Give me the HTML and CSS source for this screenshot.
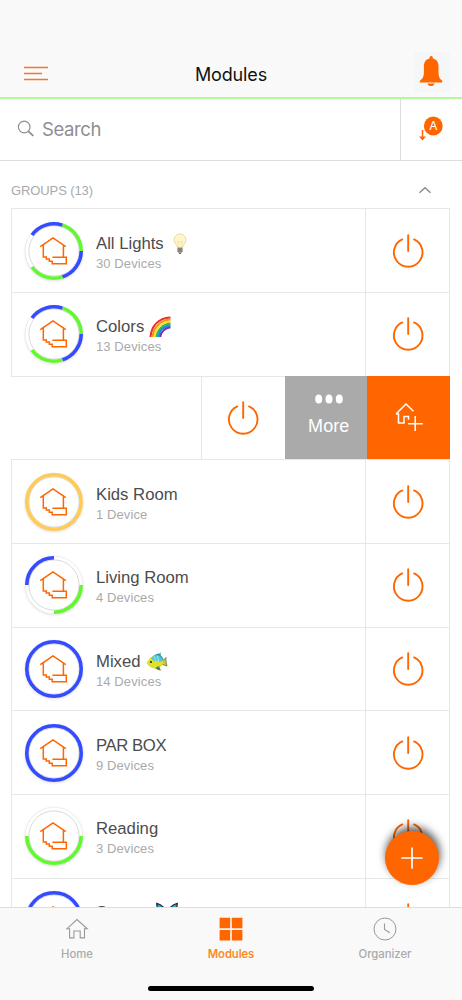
FILE: index.html
```html
<!DOCTYPE html>
<html lang="en">
<head>
<meta charset="utf-8">
<title>Modules</title>
<link rel="stylesheet" href="styles.css">
</head>
<body>
<svg class="defs" width="0" height="0" aria-hidden="true">
  <symbol id="house" viewBox="0 0 64 64">
    <path d="M18.3 27.7 31 18.8l12.8 8.900M21.300 26v12h3v2h3v2.200h2.900v2.600h14.100V38.200H30.400M41.400 26v12" fill="none" stroke="#ff6600" stroke-width="1.500"/>
  </symbol>
  <symbol id="track" viewBox="0 0 64 64">
    <circle cx="32" cy="32" r="28.8" fill="#fff" stroke="#ececec" stroke-width=".8"/>
    <circle cx="32" cy="32" r="25.1" fill="#fff" stroke="#dadada" stroke-width="1"/>
  </symbol>
  <symbol id="power" viewBox="0 0 36 36">
    <path d="M12.3 6.4a14.3 14.3 0 1 0 11.8 0M18.2 2.1v16" fill="none" stroke="#ff6600" stroke-width="1.9" stroke-linecap="round"/>
  </symbol>
</svg>

<div class="app">
  <header class="header">
    <svg class="menu" viewBox="0 0 24 16"><path d="M0 1.500h24M0 7.500h18M0 13.500h24" stroke="#f47632" stroke-width="1.500"/></svg>
    <h1 class="title">Modules</h1>
    <span class="bell"><svg viewBox="0 0 36 40"><path d="M15.500 5.700a1.700 1.700 0 0 1 3.400 0v.800c4 .8 5.600 4 5.600 8v5.700c0 4 1 6.900 3.800 8.500v1.700H5.800v-1.700c3-1.600 4.100-4.500 4.100-8.500v-5.700c0-4 1.600-7.200 5.600-8zM13.500 31.500h7c-.4 1.700-1.700 2.600-3.500 2.600s-3.100-.9-3.500-2.600z" fill="#ff6600"/></svg></span>
  </header>

  <div class="search">
    <div class="field">
      <svg viewBox="0 0 18 18"><circle cx="7.2" cy="7" r="5.8"/><path d="m11.5 11.3 4.8 4.6" stroke-width="1.8"/></svg>
      <span>Search</span>
    </div>
    <div class="sort">
      <svg viewBox="0 0 26 26"><circle cx="15.3" cy="10" r="9.4" fill="#ff6600"/><path d="M4.500 14v9" stroke="#ff6600" stroke-width="1.500"/><path d="M1 20.400h7L4.500 24.500z" fill="#ff6600"/><text x="15.300" y="14" text-anchor="middle">A</text></svg>
    </div>
  </div>

  <main class="content">
    <div class="section"><span>GROUPS (13)</span><svg viewBox="0 0 14 8"><path d="m1.500 6.700 5.500-5 5.500 5" fill="none" stroke="#888" stroke-width="1.300"/></svg></div>

    <div class="row">
      <div class="info">
        <svg class="ring"><use href="#track"/><g class="arcs" transform="rotate(18 32 32)"><circle class="green" cx="32" cy="32" r="27.2" pathLength="360" stroke-dasharray="72 288" transform="rotate(-90 32 32)"/><circle class="blue" cx="32" cy="32" r="27.2" pathLength="360" stroke-dasharray="72 288" transform="rotate(-18 32 32)"/><circle class="green" cx="32" cy="32" r="27.2" pathLength="360" stroke-dasharray="72 288" transform="rotate(54 32 32)"/><circle class="blue" cx="32" cy="32" r="27.2" pathLength="360" stroke-dasharray="72 288" transform="rotate(198 32 32)"/></g><use href="#house"/></svg>
        <div class="label"><div class="name">All Lights <svg class="emoji bulb" viewBox="0 0 18 22"><path d="M9 1C5 1 3 4 3.2 7c.1 3.1 2.5 4.4 3.2 7.5h5.2c.7-3.1 3.2-4.4 3.2-7.5C15 4 13 1 9 1z" fill="#fff5ce" stroke="#ecd999"/><path d="M7.5 14 6.7 8.3 9 9.5l2.3-1.2-.8 5.7" fill="none" stroke="#f1d68c" stroke-width=".7"/><path d="M6.5 14.5h5v4L10 20.7H8l-1.5-2.2z" fill="#aaa69d"/><path d="M6.5 16h5m-5 2h5M8 20.5h2" stroke="#5c5a56" stroke-width=".9"/></svg></div><div class="count">30 Devices</div></div>
      </div>
      <div class="toggle"><svg><use href="#power"/></svg></div>
    </div>

    <div class="row">
      <div class="info">
        <svg class="ring"><use href="#track"/><g class="arcs" transform="rotate(18 32 32)"><circle class="green" cx="32" cy="32" r="27.2" pathLength="360" stroke-dasharray="72 288" transform="rotate(-90 32 32)"/><circle class="blue" cx="32" cy="32" r="27.2" pathLength="360" stroke-dasharray="72 288" transform="rotate(-18 32 32)"/><circle class="green" cx="32" cy="32" r="27.2" pathLength="360" stroke-dasharray="72 288" transform="rotate(54 32 32)"/><circle class="blue" cx="32" cy="32" r="27.2" pathLength="360" stroke-dasharray="72 288" transform="rotate(198 32 32)"/></g><use href="#house"/></svg>
        <div class="label"><div class="name">Colors <svg class="emoji rainbow" viewBox="0 0 22 22"><g fill="none" stroke-width="2.1"><path d="M1.5 21C2.5 10 9 2.3 21.5 1.5" stroke="#ed2e2a"/><path d="M3.5 21C4.5 11.3 10.8 4.3 21.5 3.5" stroke="#ff8c1c"/><path d="M5.5 21C6.5 12.6 12 6.3 21.5 5.5" stroke="#ffe129"/><path d="M7.5 21C8.5 13.9 13.5 8.3 21.5 7.5" stroke="#34ba42"/><path d="M9.4 21c1-6 5-11 12.1-11.6" stroke="#198ee8"/><path d="M11.2 21c1-5 4.3-9 10.3-9.7" stroke="#7537b8"/></g></svg></div><div class="count">13 Devices</div></div>
      </div>
      <div class="toggle"><svg><use href="#power"/></svg></div>
    </div>

    <div class="row swiped">
      <div class="rest"></div>
      <div class="toggle"><svg><use href="#power"/></svg></div>
      <div class="more"><svg viewBox="0 0 28 10"><g fill="#fff"><ellipse cx="3.7" cy="5" rx="3.5" ry="4.5"/><ellipse cx="14" cy="5" rx="3.5" ry="4.5"/><ellipse cx="24.3" cy="5" rx="3.5" ry="4.5"/></g></svg><span>More</span></div>
      <div class="add"><svg viewBox="0 0 30 30"><path d="M2 12 12 2l7.5 7.3M2 12h2.500v9h5.500v-6.500h4.500v3.200M21.200 14v15M14 21.800h14.800M2 12l1-1" fill="none" stroke="#fff" stroke-width="1.500"/></svg></div>
    </div>

    <div class="row">
      <div class="info">
        <svg class="ring"><use href="#track"/><g class="arcs"><circle class="yellow" cx="32" cy="32" r="27.2"/></g><use href="#house"/></svg>
        <div class="label"><div class="name">Kids Room</div><div class="count">1 Device</div></div>
      </div>
      <div class="toggle"><svg><use href="#power"/></svg></div>
    </div>

    <div class="row">
      <div class="info">
        <svg class="ring"><use href="#track"/><g class="arcs"><path class="blue" d="M4.8 32A27.2 27.2 0 0 1 32 4.8"/><path class="green" d="M59.2 32A27.2 27.2 0 0 1 32 59.2"/></g><use href="#house"/></svg>
        <div class="label"><div class="name">Living Room</div><div class="count">4 Devices</div></div>
      </div>
      <div class="toggle"><svg><use href="#power"/></svg></div>
    </div>

    <div class="row">
      <div class="info">
        <svg class="ring"><use href="#track"/><g class="arcs"><circle class="blue" cx="32" cy="32" r="27.2"/></g><use href="#house"/></svg>
        <div class="label"><div class="name">Mixed <svg class="emoji fish" viewBox="0 0 22 20"><path d="M6 5C9 2 11 1.500 13.500 1.500l1.500-1-.5 2.500c1.500 1 2.500 3 3 5l-3 1z" fill="#3596ad"/><path d="m15.500 10 4.500-4.500c-.3 3 .2 5.500 1 8.500L15.500 12z" fill="#d8c43a" stroke="#5d7548" stroke-width=".8"/><path d="M.500 11C3 6 6.500 3 10.500 3.500S16.500 7 17.500 11c-2 4-5.500 6-9 5.500-3.300-.3-6.500-2.500-8-5.500z" fill="#dfe12f"/><path d="M5 6.500C7.500 4 9 3 11.500 3.300c3 .5 4.500 3 5.300 5.700l-3 .8-2.800-1.300-3 .5z" fill="#4fc6df"/><path d="m9 16 4-2 2 4.500c-2 0-4-.8-6-2.500z" fill="#617c43"/><path d="m8.500 4.500 .8 4m2-4.500 1.500 5" stroke="#b4eef5" stroke-width=".8"/><circle cx="5" cy="10" r="1.100" fill="#222"/></svg></div><div class="count">14 Devices</div></div>
      </div>
      <div class="toggle"><svg><use href="#power"/></svg></div>
    </div>

    <div class="row">
      <div class="info">
        <svg class="ring"><use href="#track"/><g class="arcs"><circle class="blue" cx="32" cy="32" r="27.2"/></g><use href="#house"/></svg>
        <div class="label"><div class="name caps">PAR BOX</div><div class="count">9 Devices</div></div>
      </div>
      <div class="toggle"><svg><use href="#power"/></svg></div>
    </div>

    <div class="row">
      <div class="info">
        <svg class="ring"><use href="#track"/><g class="arcs"><path class="green" d="M59.2 32a27.2 27.2 0 0 1-54.4 0"/></g><use href="#house"/></svg>
        <div class="label"><div class="name">Reading</div><div class="count">3 Devices</div></div>
      </div>
      <div class="toggle"><svg><use href="#power"/></svg></div>
    </div>

    <div class="row">
      <div class="info">
        <svg class="ring"><use href="#track"/><g class="arcs"><circle class="blue" cx="32" cy="32" r="27.2"/></g><use href="#house"/></svg>
        <div class="label"><div class="name">Sweets <svg class="emoji butterfly" viewBox="0 0 22 22"><path d="M11 10C8 5 4 2 .700 1.400c.3 5 2.300 9 6 10C5 15 7 19 11 13c4 6 6 2 4.300-1.600 3.700-1 5.700-5 6-10C18 2 14 5 11 10z" fill="#35a8df" stroke="#222" stroke-width="1.200"/></svg></div></div>
      </div>
      <div class="toggle"><svg><use href="#power"/></svg></div>
    </div>
  </main>

  <nav class="tabs">
    <div class="tab"><svg viewBox="0 0 24 24"><path d="M1.800 11.800 12 2.500l10.200 9.300h-2.700v9.100h-4.300v-6.900H8.900v6.900H4.600v-9.100z" fill="none" stroke="#999" stroke-width="1.100"/></svg><span class="wide">Home</span></div>
    <div class="tab active"><svg viewBox="0 0 24 24"><path d="M.6.700h10.600v10.600H.600zM12.800.700h10.600v10.600H12.800zM.600 12.900h10.600v10.600H.600zM12.800 12.900h10.600v10.600H12.800z" fill="#ff6600"/></svg><span>Modules</span></div>
    <div class="tab"><svg viewBox="0 0 24 24"><circle cx="12" cy="12" r="11" fill="none" stroke="#999"/><path d="M11.500 6.500v6l5.300 3.300" fill="none" stroke="#999" stroke-width="1.100"/></svg><span>Organizer</span></div>
    <div class="home-bar"></div>
  </nav>
  <div class="fab"><svg viewBox="0 0 22 22"><path d="M11 1v20M1 11h20" stroke="#fff" stroke-width="1.700" stroke-linecap="round"/></svg></div>
</div>
</body>
</html>
```
FILE: styles.css
```css
* { box-sizing: border-box; }
body { margin: 0; background: #fff; font-family: "Liberation Sans", Arial, sans-serif; }
svg { display: block; flex: none; }
.defs { position: absolute; }
.app { position: relative; height: 1000px; overflow: hidden; display: flex; flex-direction: column; }

.header { height: 99px; flex: none; padding: 50px 12px 0 24px; background: #f9f9f9; border-bottom: 2px solid #b3f89b; display: grid; grid-template-columns: 36px 1fr 36px; align-items: center; }
.menu { width: 24px; height: 16px; }
.title { margin: 2px 0 0; padding-right: 12px; text-align: center; font: 400 18px Inter, sans-serif; letter-spacing: -.15px; line-height: 40px; color: #111; }
.bell { background: #f5f6f8; margin-top: -3px; }
.bell svg { width: 36px; height: 40px; }

.search { height: 61.500px; flex: none; display: flex; border-bottom: 1.500px solid #dedede; }
.field { flex: 1; display: flex; align-items: center; gap: 7px; padding-left: 17px; font-size: 18.500px; line-height: 20px; color: #8e8e93; font-family: Inter, sans-serif; letter-spacing: -.400px; }
.field svg { width: 18px; height: 18px; fill: none; stroke: #8e8e93; stroke-width: 1.200; }
.sort { width: 62.500px; border-left: 1.500px solid #dedede; padding: 17px 0 0 17.500px; }
.sort svg { width: 26px; height: 26px; }
.sort text { font: 12px Inter, sans-serif; fill: #fff; }

.content { flex: 1; min-height: 0; overflow: hidden; padding: 0 12.500px 0 11px; }
.section { height: 47.800px; padding: 12px 17.500px 0 0; display: flex; justify-content: space-between; align-items: center; font-size: 13px; letter-spacing: -.1px; color: #aaa; }
.section svg { width: 14px; height: 8px; }
.row { height: 83.700px; display: flex; border: 1px solid #e7e7e7; border-bottom: 0; }
.info { flex: 1; display: flex; align-items: center; padding-left: 10px; gap: 10px; }
.ring { width: 64px; height: 64px; filter: drop-shadow(0 1px 1px rgba(0, 0, 0, .12)); }
.arcs { fill: none; stroke-width: 3.600; }
.green { stroke: #61f92e; }
.blue { stroke: #344bff; }
.yellow { stroke: #ffca55; }
.label { padding-top: 5px; height: 44px; }
.name { display: flex; align-items: center; height: 20px; font-size: 16.700px; line-height: 20px; color: #4c4c4c; white-space: nowrap; }
.caps { letter-spacing: -.400px; }
.count { font-size: 13px; line-height: 18px; margin-top: 1px; color: #aaa; letter-spacing: .100px; }
.emoji { width: 22px; height: 22px; margin-left: 5px; }
.emoji.bulb { width: 18px; margin-left: 7px; }
.emoji.fish { height: 20px; }
.toggle { width: 83.500px; border-left: 1px solid #e7e7e7; display: flex; align-items: center; justify-content: center; padding-left: 1px; }
.toggle svg { width: 36px; height: 36px; }
.swiped { border-left: 0; border-right: 0; }
.swiped .toggle { width: 84px; padding-left: 0; }
.rest { flex: 1; }
.more, .add { width: 82.500px; margin-top: -1px; color: #fff; }
.more { background: #aaa; display: flex; flex-direction: column; align-items: center; padding: 18px 0 0 6px; font-size: 18px; line-height: 24px; letter-spacing: .1px; }
.more svg { width: 28px; height: 10px; margin-bottom: 10px; }
.add { background: #ff6600; padding: 26px 0 0 27px; }
.add svg { width: 30px; height: 30px; }

.tabs { position: relative; flex: none; height: 93px; display: grid; grid-template-columns: repeat(3, 154px); background: #f9f9f9; border-top: 1px solid #dedede; }
.tab { display: flex; flex-direction: column; align-items: center; padding-top: 8.500px; gap: 6.500px; font: 500 11.300px Inter, sans-serif; color: #aaa; }
.tab svg { width: 24px; height: 24px; }
.tab.active { color: #ff8a1f; font-weight: 600; letter-spacing: -.1px; }
.home-bar { position: absolute; left: 148px; top: 78px; width: 166px; height: 5px; border-radius: 3px; background: #000; }
.fab { position: absolute; left: 385px; top: 831px; width: 54px; height: 54px; border-radius: 50%; background: #ff6600; display: flex; align-items: center; justify-content: center; box-shadow: 1px -4px 8px rgba(0, 0, 0, .65); }
.fab svg { width: 22px; height: 22px; }
```
